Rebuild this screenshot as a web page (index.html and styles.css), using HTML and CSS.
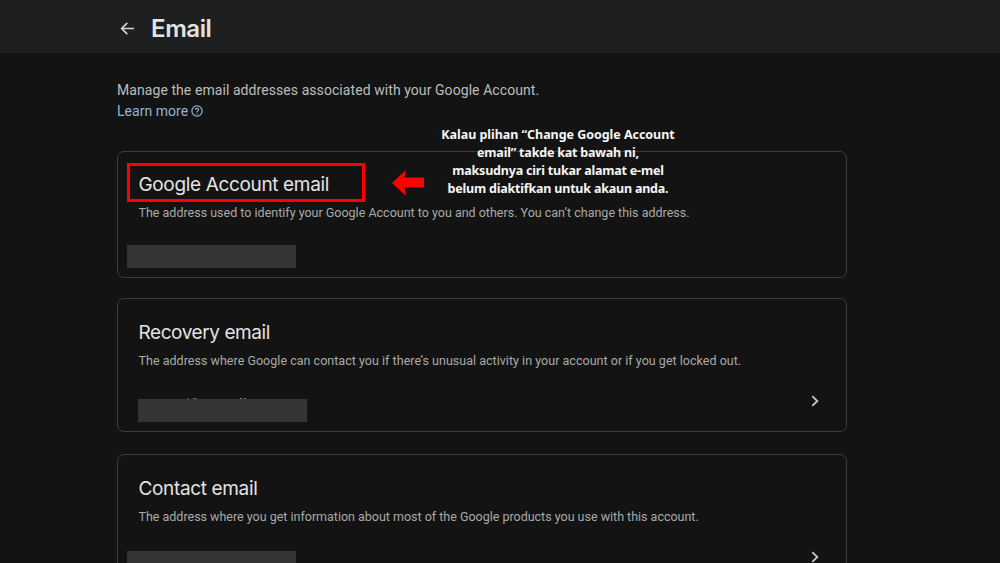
FILE: index.html
```html
<!DOCTYPE html>
<html lang="en">
<head>
  <meta charset="UTF-8" />
  <meta name="viewport" content="width=device-width, initial-scale=1" />
  <title>Email</title>
  <link rel="stylesheet" href="styles.css">
</head>
<body>
  <header class="topbar">
    <svg class="back" viewBox="0 0 16 16"><path d="M15 8H2M7.8 2L1.8 8l6 6" /></svg>
    <h1>Email</h1>
  </header>

  <main>
    <p class="intro">Manage the email addresses associated with your Google Account.</p>
    <a class="learn" href="#"><span>Learn more</span><svg viewBox="0 0 12 12"><circle cx="6" cy="6" r="5.1" /><path d="M4.4 4.8c0-2 3.2-2 3.2-.1 0 1.2-1.6 1.2-1.6 2.5M6 8.2v1" /></svg></a>

    <section class="card card-account">
      <h2><span class="marked">Google Account email</span></h2>
      <p class="desc">The address used to identify your Google Account to you and others. You can’t change this address.</p>
      <div class="row"><span class="redacted"></span></div>

      <!-- Annotation -->
      <svg class="pointer" viewBox="0 0 32 26"><path d="M0 13L14 0L12.5 7.5H32V17.5H12.5L14 26Z" /></svg>
      <p class="note"><span class="note-first">Kalau plihan “Change Google Account</span><br>email” takde kat bawah ni,<br>maksudnya ciri tukar alamat e-mel<br>belum diaktifkan untuk akaun anda.</p>
    </section>

    <section class="card card-recovery">
      <h2>Recovery email</h2>
      <p class="desc">The address where Google can contact you if there’s unusual activity in your account or if you get locked out.</p>
      <div class="row">
        <span class="redacted inset"></span>
        <svg class="chevron" viewBox="0 0 8 12"><path d="M1.3 1.2L6.3 6l-5 4.8" /></svg>
      </div>
    </section>

    <section class="card card-contact">
      <h2>Contact email</h2>
      <p class="desc">The address where you get information about most of the Google products you use with this account.</p>
      <div class="row">
        <span class="redacted"></span>
        <svg class="chevron" viewBox="0 0 8 12"><path d="M1.3 1.2L6.3 6l-5 4.8" /></svg>
      </div>
    </section>
  </main>
</body>
</html>
```

FILE: styles.css
```css
*, *::before {
  box-sizing: border-box;
}
body {
  margin: 0;
  height: 563px;
  overflow: hidden;
  background: #131313;
  color: #e3e3e3;
  font-family: Roboto, "Liberation Sans", sans-serif;
}
h1, h2, p {
  margin: 0;
}
.topbar {
  display: flex;
  align-items: center;
  height: 53px;
  padding: 4px 0 0 120px;
  background: #1e1f20;
}
.back {
  width: 15px;
  height: 15px;
  margin-right: 16px;
  fill: none;
  stroke: #d4d4d4;
  stroke-width: 1.8;
}
h1 {
  font: 600 24px/30px Inter, sans-serif;
  letter-spacing: -0.4px;
}
main {
  width: 730px;
  margin-left: 117px;
  padding-top: 27px;
}
.intro {
  color: #bdbdbb;
  font-size: 14px;
  line-height: 21px;
  letter-spacing: 0.07px;
  white-space: nowrap;
}
.learn {
  display: flex;
  align-items: center;
  gap: 3px;
  height: 20px;
  color: #91b4d8;
  font-size: 14px;
  letter-spacing: 0.03px;
  text-decoration: none;
}
.learn svg {
  width: 12px;
  height: 12px;
  fill: none;
  stroke: #91b4d8;
  stroke-width: 1.2;
}
.card {
  position: relative;
  padding: 20px 20px 0 20.5px;
  border: 1px solid #3c3d3e;
  border-radius: 7px;
}
.card-account {
  height: 127px;
  margin-top: 30px;
}
.card-recovery {
  height: 134px;
  margin-top: 20px;
  padding-top: 21px;
}
.card-contact {
  height: 134px;
  margin-top: 22px;
  padding-top: 21px;
}
h2 {
  height: 26px;
  font: 400 19px/26px Inter, sans-serif;
  letter-spacing: -0.35px;
  white-space: nowrap;
}
.card-recovery h2 {
  letter-spacing: -0.43px;
}
.marked {
  position: relative;
}
/* red box around the heading */
.marked::before {
  content: "";
  position: absolute;
  left: -11.5px;
  top: -10px;
  width: 238px;
  height: 39px;
  border: 3px solid #fe0000;
}
.desc {
  margin-top: 6px;
  color: #aaaaa8;
  font-size: 12.5px;
  line-height: 18px;
  white-space: nowrap;
}
.card-recovery .desc {
  letter-spacing: 0.025px;
}
.card-contact .desc {
  letter-spacing: -0.01px;
}
.row {
  display: flex;
  align-items: flex-start;
  justify-content: space-between;
  margin-top: 23px;
  padding-right: 7px;
}
.card-recovery .row,
.card-contact .row {
  margin-top: 25px;
}
.redacted {
  width: 169px;
  height: 23px;
  margin-left: -11.5px;
  background: #343537;
}
.redacted.inset {
  position: relative;
  margin: 4px 0 0 -0.5px;
}
/* tips of the covered letters */
.redacted.inset::before {
  content: "";
  position: absolute;
  left: 49px;
  top: -1px;
  width: 2px;
  height: 1px;
  background: #555;
  box-shadow: 6px 0 #777, 8px 0 #555, 53px 0 #777, 57px 0 #777;
}
.chevron {
  width: 8px;
  height: 12px;
  fill: none;
  stroke: #c7c7c7;
  stroke-width: 1.8;
}
.pointer {
  position: absolute;
  left: 274px;
  top: 18px;
  width: 32px;
  height: 26px;
  fill: #fe0000;
}
.note {
  position: absolute;
  left: 320px;
  top: -26px;
  width: 240px;
  color: #f6f6f6;
  font: 700 12.5px/18px "Noto Sans", sans-serif;
  letter-spacing: -0.2px;
  text-align: center;
  white-space: nowrap;
}
.note-first {
  letter-spacing: -0.04px;
}
```
